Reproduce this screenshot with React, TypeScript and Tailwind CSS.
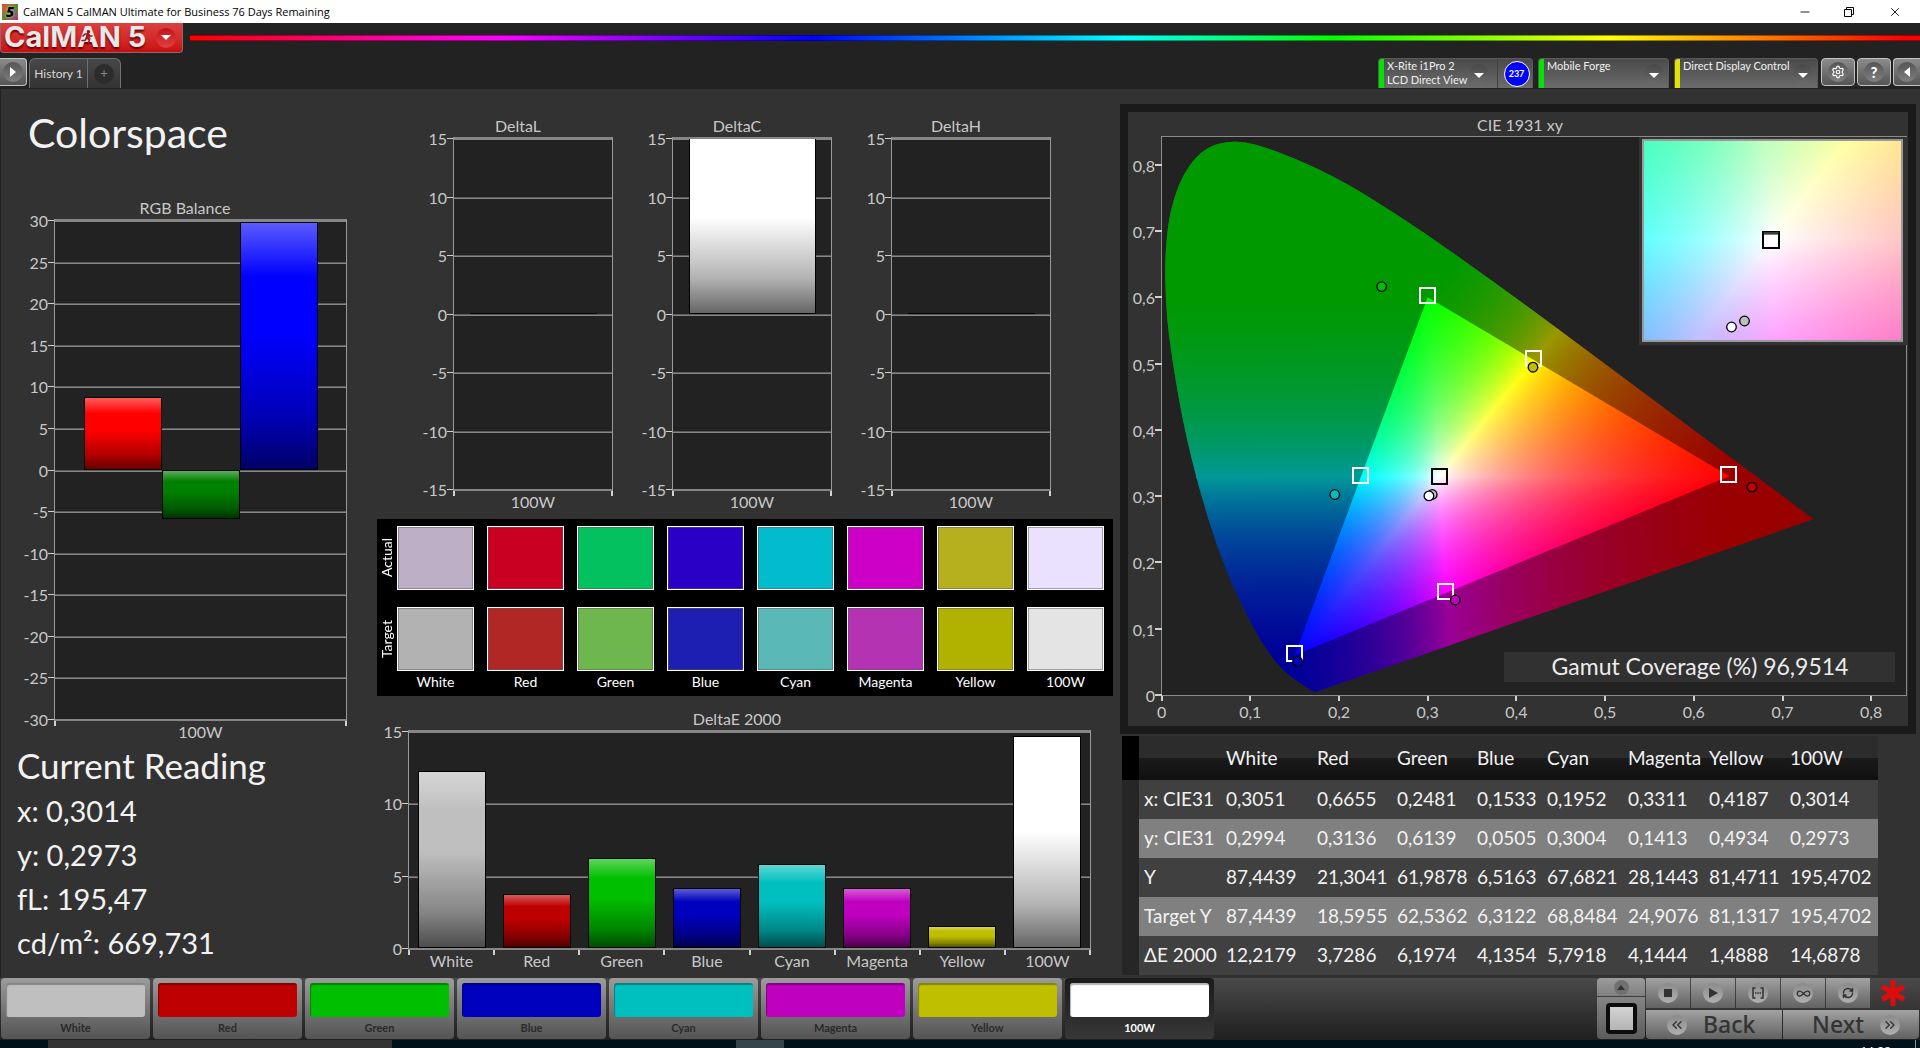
import {
  ChevronsLeft,
  ChevronsRight,
  Infinity as InfinityIcon,
  Minus,
  RefreshCw,
  Settings,
  X,
} from "lucide-react";
import type { ReactNode } from "react";

type Bar = { value: number; color: string };

type ChartProps = {
  id: string;
  title: string;
  width: number;
  height: number;
  plot: { left: number; right: number; top: number; bottom: number };
  titleX: number;
  min: number;
  max: number;
  bars: Bar[];
  // categories along the x axis, each one holds bars.length / categories.length bars
  categories: string[];
  barWidth: number;
};

const colors = [
  { name: "White", fill: "bg-[#bfbfbf]", actual: "bg-[#bcafc6]", target: "bg-[#b2b2b2]" },
  { name: "Red", fill: "bg-[#bf0000]", actual: "bg-[#c90022]", target: "bg-[#b12726]" },
  { name: "Green", fill: "bg-[#00bf00]", actual: "bg-[#03c15f]", target: "bg-[#6eb74f]" },
  { name: "Blue", fill: "bg-[#0000bf]", actual: "bg-[#2b00c6]", target: "bg-[#1c1fb2]" },
  { name: "Cyan", fill: "bg-[#00bfbf]", actual: "bg-[#00bccd]", target: "bg-[#5ab8b7]" },
  { name: "Magenta", fill: "bg-[#bf00bf]", actual: "bg-[#cc00c6]", target: "bg-[#b333b3]" },
  { name: "Yellow", fill: "bg-[#bfbf00]", actual: "bg-[#b6b01f]", target: "bg-[#b1b200]" },
  { name: "100W", fill: "bg-white", actual: "bg-[#eae0ff]", target: "bg-[#e4e4e4]" },
];

const rows = [
  ["x: CIE31", "0,3051", "0,6655", "0,2481", "0,1533", "0,1952", "0,3311", "0,4187", "0,3014"],
  ["y: CIE31", "0,2994", "0,3136", "0,6139", "0,0505", "0,3004", "0,1413", "0,4934", "0,2973"],
  ["Y", "87,4439", "21,3041", "61,9878", "6,5163", "67,6821", "28,1443", "81,4711", "195,4702"],
  ["Target Y", "87,4439", "18,5955", "62,5362", "6,3122", "68,8484", "24,9076", "81,1317", "195,4702"],
  ["ΔE 2000", "12,2179", "3,7286", "6,1974", "4,1354", "5,7918", "4,1444", "1,4888", "14,6878"],
];

const deltaE: Bar[] = [
  { value: 12.2179, color: "#bfbfbf" },
  { value: 3.7286, color: "#bf0000" },
  { value: 6.1974, color: "#00bf00" },
  { value: 4.1354, color: "#0000bf" },
  { value: 5.7918, color: "#00bfbf" },
  { value: 4.1444, color: "#bf00bf" },
  { value: 1.4888, color: "#bfbf00" },
  { value: 14.6878, color: "#ffffff" },
];

const BarChart = ({
  id,
  title,
  width,
  height,
  plot,
  titleX,
  min,
  max,
  bars,
  categories,
  barWidth,
}: ChartProps) => {
  const { left, right, top, bottom } = plot;
  const y = (v: number) => Math.round(bottom - ((v - min) / (max - min)) * (bottom - top));
  const ticks: number[] = [];
  for (let v = min; v <= max; v += 5) ticks.push(v);

  const slot = (right - left) / categories.length;
  const perSlot = bars.length / categories.length;

  return (
    <svg
      viewBox={`0 0 ${width} ${height}`}
      className="block h-auto w-full overflow-visible font-['Lato',sans-serif] text-[16px]"
      fill="#c8c8c8"
      role="img"
      aria-label={title}
    >
      <defs>
        <linearGradient id={`${id}-gloss`} x1="0" y1="0" x2="0" y2="1">
          <stop offset="0" stopColor="#fff" stopOpacity="0.36" />
          <stop offset="0.22" stopColor="#fff" stopOpacity="0" />
          <stop offset="0.45" stopColor="#000" stopOpacity="0" />
          <stop offset="0.8" stopColor="#000" stopOpacity="0.3" />
          <stop offset="1" stopColor="#000" stopOpacity="0.6" />
        </linearGradient>
      </defs>
      <text x={titleX} y={top - 7} textAnchor="middle">
        {title}
      </text>
      <g shapeRendering="crispEdges">
        <rect x={left} y={top} width={right - left} height={bottom - top} fill="#222" />
        {ticks.map((v) => (
          <g key={v}>
            <rect x={left} y={y(v) - 1} width={right - left} height={1} fill="#5c5c5c" />
            <rect x={left} y={y(v)} width={right - left} height={1} fill="#868686" />
            <rect x={left - 7} y={y(v) - 1} width={7} height={1} fill="#d0d0d0" />
          </g>
        ))}
        {bars.map((bar, i) => {
          const s = Math.floor(i / perSlot);
          const inner = i % perSlot;
          const x = Math.round(
            left + slot * s + (slot - barWidth * perSlot) / 2 + inner * barWidth,
          );
          const y0 = y(Math.max(bar.value, 0)) - 1;
          const h = Math.max(y(Math.min(bar.value, 0)) - 1 - y0, 1);
          if (h < 3) {
            return <rect key={i} x={x} y={y0 - 1} width={barWidth} height={1} fill="#000" />;
          }
          return (
            <g key={i}>
              <rect x={x} y={y0} width={barWidth} height={h} fill="#000" />
              <rect x={x + 1} y={y0 + 1} width={barWidth - 2} height={h - 2} fill={bar.color} />
              <rect x={x + 1} y={y0 + 1} width={barWidth - 2} height={h - 2} fill={`url(#${id}-gloss)`} />
            </g>
          );
        })}
        <rect x={left - 1} y={top - 2} width={right - left + 2} height={2} fill="#868686" />
        <rect x={left - 1} y={top - 2} width={1} height={bottom - top + 3} fill="#9a9a9a" />
        <rect x={right} y={top - 2} width={1} height={bottom - top + 3} fill="#9a9a9a" />
        <rect x={left} y={bottom - 1} width={right - left} height={2} fill="#868686" />
        {[...categories, ""].map((_, i) => (
          <rect key={i} x={Math.round(left + slot * i) - 1} y={bottom + 1} width={2} height={5} fill="#d0d0d0" />
        ))}
      </g>
      {ticks.map((v) => (
        <text key={v} x={left - 7} y={y(v) + 6} textAnchor="end">
          {v}
        </text>
      ))}
      {categories.map((c, i) => (
        <text key={c} x={left + slot * (i + 0.5)} y={bottom + 18} textAnchor="middle">
          {c}
        </text>
      ))}
    </svg>
  );
};

// ---- CIE diagram -----------------------------------------------------------

type Pt = [number, number];

const px = ([x, y]: Pt): Pt => [33.6 + 887 * x, 583 - 663 * y];

const locus: Pt[] = [
  [0.1741, 0.005], [0.1714, 0.0051], [0.1644, 0.0109], [0.1566, 0.0177], [0.144, 0.0297],
  [0.1355, 0.0399], [0.1241, 0.0578], [0.1096, 0.0868], [0.0913, 0.1327], [0.0687, 0.2007],
  [0.0454, 0.295], [0.0235, 0.4127], [0.0082, 0.5384], [0.0045, 0.6], [0.0039, 0.6548],
  [0.0069, 0.708], [0.0139, 0.7502], [0.0245, 0.785], [0.0389, 0.812], [0.055, 0.828],
  [0.0743, 0.8348], [0.094, 0.834], [0.1142, 0.8272], [0.1547, 0.8069], [0.1929, 0.7826],
  [0.2296, 0.7553], [0.3016, 0.6923], [0.3731, 0.6245], [0.4441, 0.5547], [0.5125, 0.4866],
  [0.5752, 0.4242], [0.627, 0.3725], [0.6658, 0.334], [0.6915, 0.3083], [0.719, 0.2809],
  [0.7347, 0.2653],
];

// rounds the corners between the sampled wavelengths, keeps both ends sharp
const locusPath = () => {
  const p = locus.map(px);
  let d = `M${p[0]}`;
  for (let i = 1; i < p.length - 1; i++) {
    const mid: Pt = [(p[i][0] + p[i + 1][0]) / 2, (p[i][1] + p[i + 1][1]) / 2];
    d += `Q${p[i]} ${mid}`;
  }
  return `${d}L${p[p.length - 1]}Z`;
};

const W: Pt = [0.3127, 0.329];
const R: Pt = [0.64, 0.33];
const G: Pt = [0.3, 0.6];
const B: Pt = [0.15, 0.06];
const C: Pt = [0.2246, 0.3287];
const M: Pt = [0.3209, 0.1542];
const Y: Pt = [0.4193, 0.5053];

// One sector between two neighbouring hues. base is the channel that is full
// everywhere, mid is the channel that the secondary hue shares.
const sectors = [
  { primary: R, secondary: Y, base: "#f00", mid: "#0f0", rest: "#00f" },
  { primary: G, secondary: Y, base: "#0f0", mid: "#f00", rest: "#00f" },
  { primary: G, secondary: C, base: "#0f0", mid: "#00f", rest: "#f00" },
  { primary: B, secondary: C, base: "#00f", mid: "#0f0", rest: "#f00" },
  { primary: B, secondary: M, base: "#00f", mid: "#f00", rest: "#0f0" },
  { primary: R, secondary: M, base: "#f00", mid: "#00f", rest: "#0f0" },
];

// foot of the perpendicular from p on the line a-b
const foot = (p: Pt, a: Pt, b: Pt): Pt => {
  const dx = b[0] - a[0];
  const dy = b[1] - a[1];
  const t = ((p[0] - a[0]) * dx + (p[1] - a[1]) * dy) / (dx * dx + dy * dy);
  return [a[0] + t * dx, a[1] + t * dy];
};

const unit = (a: Pt, b: Pt): Pt => {
  const l = Math.hypot(b[0] - a[0], b[1] - a[1]);
  return [(b[0] - a[0]) / l, (b[1] - a[1]) / l];
};

// every sector runs slightly under its neighbours so that no gap shows
const sectorPoints = (primary: Pt, secondary: Pt) => {
  const w = px(W);
  const p = px(primary);
  const q = px(secondary);
  const far = (a: Pt, b: Pt): Pt => {
    const u = unit(b, a);
    return [w[0] + (a[0] - w[0]) * 9 + u[0] * 2, w[1] + (a[1] - w[1]) * 9 + u[1] * 2];
  };
  const up = unit(w, p);
  const uq = unit(w, q);
  const apex: Pt = [w[0] - (up[0] + uq[0]) / 2, w[1] - (up[1] + uq[1]) / 2];
  return [apex, far(p, q), far(q, p)].join(" ");
};

const offsets = [0, 0.05, 0.1, 0.2, 0.3, 0.4, 0.5, 0.65, 0.8, 1];

const Ramp = ({ id, from, to, color }: { id: string; from: Pt; to: Pt; color: string }) => (
  <linearGradient
    id={id}
    gradientUnits="userSpaceOnUse"
    x1={from[0]}
    y1={from[1]}
    x2={to[0]}
    y2={to[1]}
  >
    {offsets.map((t) => (
      <stop key={t} offset={t} stopColor={color} stopOpacity={(1 - t) / (1 - t + 2.2 * t)} />
    ))}
  </linearGradient>
);

const SectorDefs = () => (
  <>
    {sectors.map((s, i) => {
      const w = px(W);
      const p = px(s.primary);
      const q = px(s.secondary);
      return (
        <g key={i}>
          <Ramp id={`mid-${i}`} from={foot(p, w, q)} to={p} color={s.mid} />
          <Ramp id={`rest-${i}`} from={w} to={foot(w, p, q)} color={s.rest} />
          <clipPath id={`sector-${i}`}>
            <polygon points={sectorPoints(s.primary, s.secondary)} />
          </clipPath>
        </g>
      );
    })}
  </>
);

const Hues = () => (
  <g>
    {sectors.map((s, i) => (
      <g key={i} className="isolate" clipPath={`url(#sector-${i})`}>
        <rect width={780} height={614} fill={s.base} />
        <rect width={780} height={614} fill={`url(#mid-${i})`} className="mix-blend-screen" />
        <rect width={780} height={614} fill={`url(#rest-${i})`} className="mix-blend-screen" />
      </g>
    ))}
  </g>
);

const measured: { at: Pt; color: string }[] = [
  { at: [0.3051, 0.3024], color: "#bfbfbf" },
  { at: [0.6655, 0.3136], color: "#bf0000" },
  { at: [0.2481, 0.6159], color: "#00bf00" },
  { at: [0.1533, 0.0505], color: "#0000bf" },
  { at: [0.1952, 0.3024], color: "#00bfbf" },
  { at: [0.3311, 0.1433], color: "#bf00bf" },
  { at: [0.4187, 0.4944], color: "#bfbf00" },
  { at: [0.3014, 0.3003], color: "#ffffff" },
];

const CieChart = () => {
  const steps = [0, 1, 2, 3, 4, 5, 6, 7, 8];
  const label = (n: number) => (n === 0 ? "0" : `0,${n}`);
  return (
    <svg
      viewBox="0 0 780 614"
      className="block h-auto w-full font-['Lato',sans-serif] text-[16px]"
      fill="#c8c8c8"
      role="img"
      aria-label="CIE 1931 xy"
    >
      <defs>
        <SectorDefs />
        <clipPath id="locus">
          <path d={locusPath()} />
        </clipPath>
        <clipPath id="gamut">
          <polygon points={[R, G, B].map(px).join(" ")} />
        </clipPath>
        <clipPath id="inset">
          <rect x={515} y={28} width={259} height={201} />
        </clipPath>
      </defs>
      <text x={392} y={19} textAnchor="middle">
        CIE 1931 xy
      </text>
      <rect x={33.5} y={24.5} width={745} height={559} fill="#222" stroke="#8a8a8a" />

      <g clipPath="url(#locus)">
        <Hues />
        <rect width={780} height={614} fill="#000" opacity={0.4} />
      </g>
      <g clipPath="url(#gamut)">
        <Hues />
      </g>

      {steps.map((n) => {
        const [x, y] = px([n / 10, n / 10]);
        return (
          <g key={n}>
            <rect x={Math.round(x) - 1} y={584} width={2} height={5} fill="#d0d0d0" />
            <rect x={27} y={Math.round(y) - 1} width={7} height={2} fill="#d0d0d0" />
            <text x={x} y={606} textAnchor="middle">
              {label(n)}
            </text>
            <text x={27} y={y + 7} textAnchor="end">
              {label(n)}
            </text>
          </g>
        );
      })}

      {[R, G, B, C, M, Y].map((p, i) => {
        const [x, y] = px(p);
        return (
          <rect key={i} x={Math.round(x) - 8} y={Math.round(y) - 9} width={15} height={15} fill="none" stroke="#fff" strokeWidth={2} />
        );
      })}
      <rect x={304} y={357} width={15} height={15} fill="none" stroke="#000" strokeWidth={2} />
      {measured.map(({ at, color }) => {
        const [x, y] = px(at);
        return <circle key={color} cx={x} cy={y} r={4.8} fill={color} stroke="#000" strokeWidth={1.3} />;
      })}

      {/* white point magnified */}
      <rect x={511} y={25} width={268} height={208} fill="#333" />
      <g clipPath="url(#inset)">
        <g transform="translate(643 128) scale(3.91 4.14) translate(-311 -364.9)">
          <Hues />
        </g>
      </g>
      <rect x={515} y={28} width={259} height={201} fill="none" stroke="#999" strokeWidth={2} />
      <rect x={635} y={120} width={16} height={16} fill="#fff" stroke="#000" strokeWidth={2} />
      <rect x={635} y={120} width={16} height={2} fill="#777" stroke="#000" />
      <circle cx={616.5} cy={209} r={4.8} fill="#bfbfbf" stroke="#000" strokeWidth={1.3} />
      <circle cx={603.5} cy={215} r={4.8} fill="#fff" stroke="#000" strokeWidth={1.3} />

      <rect x={376} y={540} width={391} height={30} fill="#313131" />
      <text x={572} y={563} textAnchor="middle" fontSize={23} fill="#ececec">
        Gamut Coverage (%) 96,9514
      </text>
    </svg>
  );
};

// ---- header ----------------------------------------------------------------

const DropArrow = () => (
  <span className="flex size-5 shrink-0 items-center justify-center rounded-full bg-gradient-to-b from-[#484848] to-[#6a6a6a]">
    <svg viewBox="0 0 10 5" className="mt-1 w-[10px]" fill="#fff">
      <path d="M0 0h10L5 5z" />
    </svg>
  </span>
);

const Device = ({ lines, strip, width, children }: { lines: string[]; strip: string; width: string; children?: ReactNode }) => (
  <div className={`flex h-[30px] overflow-hidden rounded-t border border-b-0 border-[#5a5a5a] bg-gradient-to-b from-[#4a4a4a] to-[#6c6c6c] ${width}`}>
    <span className={`w-[5px] shrink-0 ${strip}`} />
    <button className={`flex grow items-center justify-between pl-[3px] text-left ${children ? "pr-0" : "pr-1"}`}>
      <span className="self-start whitespace-nowrap text-[11px] leading-[14px] text-[#f0f0f0]">
        {lines.map((l) => (
          <span key={l} className="block">
            {l}
          </span>
        ))}
      </span>
      <DropArrow />
    </button>
    {children}
  </div>
);

const RoundButton = ({ label, className, children }: { label: string; className: string; children: ReactNode }) => (
  <button
    aria-label={label}
    className={`flex h-7 items-center justify-center border border-[#c4c4c4] bg-gradient-to-b from-[#8c8c8c] to-[#555] ${className}`}
  >
    <span className="flex size-5 items-center justify-center rounded-full bg-gradient-to-b from-[#555] to-[#808080] text-white">
      {children}
    </span>
  </button>
);

const Header = () => (
  <header>
    <div className="flex h-[23px] items-center bg-white font-['Open_Sans',sans-serif] text-black">
      <span className="ml-[2px] flex size-4 items-center justify-center bg-gradient-to-br from-[#e33] via-[#583] to-[#a27]">
        <span className="text-[14px] leading-4 font-extrabold text-black italic [text-shadow:0_0_2px_#fff]">5</span>
      </span>
      <span className="ml-[5px] pt-px text-[11px]">CalMAN 5 CalMAN Ultimate for Business 76 Days Remaining</span>
      <div className="ml-auto flex gap-[32px] pr-[18px]">
        <button aria-label="Minimize">
          <Minus size={14} strokeWidth={1.5} />
        </button>
        <button aria-label="Restore">
          <svg viewBox="0 0 12 12" className="size-3" fill="none" stroke="#000">
            <path d="M.5 3.5h7v7h-7zM2.500 3.500v-2h7v7h-2" />
          </svg>
        </button>
        <button aria-label="Close">
          <X size={14} strokeWidth={1.5} />
        </button>
      </div>
    </div>

    <div className="flex h-[30px] items-start">
      <button
        aria-label="CalMAN 5 menu"
        className="flex h-[30px] w-[183px] shrink-0 items-center justify-between rounded-b border border-t-0 border-[#8a6a6a] bg-gradient-to-b from-[#dd3f3f] to-[#c90d0d] pr-[6px] pl-[3px]"
      >
        <span className="pb-px font-['Inter',sans-serif] text-[29px] leading-[28px] font-bold whitespace-nowrap text-[#e8e8e8] [text-shadow:0_2px_2px_#600]">
          CalM
          <span className="relative">
            A
            <svg
              viewBox="0 0 12 14"
              className="absolute top-[11px] left-1 w-3"
              fill="none"
              stroke="#a01515"
              strokeWidth={1.6}
              strokeLinecap="round"
            >
              <circle cx="7.500" cy="1.800" r="1" fill="#a01515" />
              <path d="M6.500 4l-1 4 3 1.500-1 3.500M5.500 8l-1.500 2.500h-3M2 6l2-2h3l2 2h2" />
            </svg>
          </span>
          N 5
        </span>
        <span className="flex size-5 items-center justify-center rounded-full bg-gradient-to-b from-[#c01018] to-[#e04040]">
          <svg viewBox="0 0 10 5" className="w-[10px]" fill="#fff">
            <path d="M0 0h10L5 5z" />
          </svg>
        </span>
      </button>
      <div className="mt-3 ml-[7px] h-[6px] grow border-y border-black/40 bg-[linear-gradient(90deg,#f00_0%,#f0f_18%,#00f_36%,#0ff_54%,#0f0_66%,#ff0_82%,#f00_99%)]" />
    </div>

    <div className="flex h-[36px] items-start pt-[5px]">
      <RoundButton label="Expand" className="w-[27px] rounded-r border-l-0">
        <svg viewBox="0 0 6 10" className="h-[10px]" fill="#fff">
          <path d="M0 0l6 5-6 5z" />
        </svg>
      </RoundButton>
      <div className="ml-[2px] flex h-[30px] rounded-t-md border border-b-0 border-[#707070] bg-gradient-to-b from-[#484848] to-[#333]">
        <button className="w-[58px] border-r border-[#707070] text-center text-[12px] text-[#d8d8d8]">
          History 1
        </button>
        <button aria-label="Add tab" className="flex w-[32px] items-center justify-center">
          <span className="flex size-5 items-center justify-center rounded-full bg-[#2c2c2c] text-[13px] text-[#888]">
            +
          </span>
        </button>
      </div>
      <div className="ml-auto flex items-start">
        <Device lines={["X-Rite i1Pro 2", "LCD Direct View"]} strip="bg-[#00e400]" width="w-[155px]">
          <span className="ml-2 flex w-[35px] shrink-0 items-center justify-center border-l border-[#404040] pl-[3px]">
            <span className="flex size-[26px] items-center justify-center rounded-full border border-white bg-[#00f] text-[9px] font-bold text-white">
              237
            </span>
          </span>
        </Device>
        <span className="w-[5px]" />
        <Device lines={["Mobile Forge"]} strip="bg-[#00e400]" width="w-[131px]" />
        <span className="w-[5px]" />
        <Device lines={["Direct Display Control"]} strip="bg-[#e4e000]" width="w-[144px]" />
        <span className="w-[3px]" />
        <RoundButton label="Settings" className="mr-[2px] w-[34px] rounded">
          <Settings size={14} />
        </RoundButton>
        <RoundButton label="Help" className="mr-[2px] w-[34px] rounded">
          <span className="text-[15px] leading-none font-black">?</span>
        </RoundButton>
        <RoundButton label="Collapse" className="w-[27px] rounded-l border-r-0">
          <svg viewBox="0 0 6 10" className="h-[10px]" fill="#fff">
            <path d="M6 0L0 5l6 5z" />
          </svg>
        </RoundButton>
      </div>
    </div>
  </header>
);

// ---- bottom bar ------------------------------------------------------------

const Dot = ({ children }: { children: ReactNode }) => (
  <span className="flex size-5 shrink-0 items-center justify-center rounded-full bg-gradient-to-b from-[#8a8a8a] to-[#b0b0b0]">
    {children}
  </span>
);

const transport: { label: string; icon: ReactNode }[] = [
  { label: "Stop", icon: <span className="size-2 bg-[#333]" /> },
  {
    label: "Play",
    icon: (
      <svg viewBox="0 0 9 10" className="ml-px h-[10px]" fill="#333">
        <path d="M0 0l9 5-9 5z" />
      </svg>
    ),
  },
  {
    label: "Read series",
    icon: (
      <svg viewBox="0 0 12 12" className="size-3" fill="none" stroke="#333" strokeWidth={1.5}>
        <path d="M3.500 1h-2.500v10h2.500M8.500 1h2.500v10h-2.500M3 6h1.500M5.300 6h1.500M7.600 6h1.500" />
      </svg>
    ),
  },
  { label: "Read continuous", icon: <InfinityIcon size={15} color="#333" /> },
  { label: "Refresh", icon: <RefreshCw size={12} color="#333" strokeWidth={3} /> },
];

const BottomBar = () => (
  <div className="flex bg-gradient-to-b from-[#4a4a4a] to-[#202020] pb-px">
    <div className="flex gap-[3px] pl-px">
      {colors.map((c, i) => {
        const active = i === colors.length - 1;
        return (
          <button
            key={c.name}
            className={`flex h-[61px] w-[149px] flex-col items-center rounded px-[5px] pt-[5px] text-[11px] leading-[22px] font-bold bg-gradient-to-b ${
              active ? "from-[#1a1a1a] to-[#383838] text-white" : "from-[#9c9c9c] to-[#545454] text-[#2a2a2a]"
            }`}
          >
            <span className={`h-9 w-full rounded-[3px] shadow-[inset_1px_2px_1px_rgba(0,0,0,0.3)] ${c.fill}`} />
            {c.name}
          </button>
        );
      })}
    </div>
    <div className="ml-auto flex gap-px">
      <div className="flex w-[48px] flex-col gap-px">
        <button aria-label="Show more" className="flex h-[18px] items-center justify-center rounded-t bg-gradient-to-b from-[#9c9c9c] to-[#808080]">
          <span className="flex size-[15px] items-center justify-center rounded-full bg-[#707070]">
            <svg viewBox="0 0 8 5" className="w-2" fill="#333">
              <path d="M0 5h8L4 0z" />
            </svg>
          </span>
        </button>
        <button aria-label="Pattern window" className="flex h-[42px] items-center justify-center rounded-b bg-gradient-to-b from-[#858585] to-[#5c5c5c]">
          <span className="size-[31px] rounded border-4 border-[#0c0c0c] bg-gradient-to-b from-[#d4d4d4] to-[#b4b4b4]" />
        </button>
      </div>
      <div className="flex w-[274px] flex-col gap-[2px]">
        <div className="flex gap-px">
          {transport.map((t) => (
            <button
              key={t.label}
              aria-label={t.label}
              className="flex h-[30px] w-[44px] items-center justify-center bg-gradient-to-b from-[#a2a2a2] to-[#626262]"
            >
              <Dot>{t.icon}</Dot>
            </button>
          ))}
          <svg viewBox="0 0 28 28" className="mt-px ml-2 size-7" stroke="#e00b0b" strokeWidth={5}>
            <path d="M14 1v26M3 7.500l22 13M25 7.500l-22 13" />
          </svg>
        </div>
        <div className="flex gap-px font-['Noto_Sans',sans-serif] text-[23px] leading-[29px] font-medium text-[#333]">
          <button className="flex h-[29px] w-[136px] items-center gap-4 rounded-bl bg-gradient-to-b from-[#a2a2a2] to-[#626262] pl-[21px]">
            <Dot>
              <ChevronsLeft size={16} />
            </Dot>
            Back
          </button>
          <button className="flex h-[29px] w-[136px] items-center justify-end gap-4 rounded-br bg-gradient-to-b from-[#a2a2a2] to-[#626262] pr-[19px]">
            Next
            <Dot>
              <ChevronsRight size={16} />
            </Dot>
          </button>
        </div>
      </div>
    </div>
  </div>
);

const DataTable = () => (
  <table className="mt-[2px] ml-[2px] w-[95%] table-fixed border-collapse text-left text-[19px] whitespace-nowrap text-[#f2f2f2]">
    <colgroup>
      <col className="w-[17px]" />
      <col className="w-[84px]" />
      <col className="w-[91px]" />
      <col className="w-[80px]" />
      <col className="w-[80px]" />
      <col className="w-[70px]" />
      <col className="w-[81px]" />
      <col className="w-[81px]" />
      <col className="w-[81px]" />
      <col />
    </colgroup>
    <thead>
      <tr className="h-[44px] bg-[linear-gradient(#2c2c2c_50%,#1a1a1a_50%,#101010)]">
        <td className="bg-black" />
        <td />
        {colors.map((c) => (
          <th key={c.name} scope="col" className="pl-[3px] font-normal">
            {c.name}
          </th>
        ))}
      </tr>
    </thead>
    <tbody>
      {rows.map((row, i) => (
        <tr key={row[0]} className={i % 2 ? "h-[39px] bg-[#808080]" : "h-[39px] bg-[#404040]"}>
          <td className="bg-[#262626]" />
          {row.map((cell, j) =>
            j === 0 ? (
              <th key={j} scope="row" className="pl-[5px] font-normal">
                {cell}
              </th>
            ) : (
              <td key={j} className="pl-[3px]">
                {cell}
              </td>
            ),
          )}
        </tr>
      ))}
    </tbody>
  </table>
);

const App = () => {
  return (
    <div className="min-h-screen bg-[#222] font-['Lato',sans-serif]">
      <Header />
      <main className="grid grid-cols-[376fr_743fr_800fr] border-l border-[#222] bg-[#323232] pb-[3px]">
        <section>
          <h1 className="pt-[19px] pl-[27px] text-[41px] leading-[50px] text-[#f2f2f2]">Colorspace</h1>
          <div className="pt-9">
            <BarChart
              id="rgb"
              title="RGB Balance"
              width={376}
              height={548}
              plot={{ left: 54, right: 345, top: 27, bottom: 526 }}
              titleX={184}
              min={-30}
              max={30}
              bars={[
                { value: 8.7, color: "#ff0000" },
                { value: -6, color: "#008000" },
                { value: 29.8, color: "#0000ff" },
              ]}
              categories={["100W"]}
              barWidth={78}
            />
          </div>
          <div className="pl-4 text-[#f2f2f2]">
            <h2 className="text-[35px] leading-[46px]">Current Reading</h2>
            <div className="pt-px text-[29px] leading-[44px]">
              <p>x: 0,3014</p>
              <p>y: 0,2973</p>
              <p>fL: 195,47</p>
              <p>cd/m²: 669,731</p>
            </div>
          </div>
        </section>

        <section className="flex flex-col pt-6">
          <div className="flex pr-[69px] pl-[17px]">
            {["DeltaL", "DeltaC", "DeltaH"].map((name) => (
              <div key={name} className="min-w-0 flex-1">
                <BarChart
                  id={name}
                  title={name}
                  width={219}
                  height={401}
                  plot={{ left: 60, right: 218, top: 26, bottom: 377 }}
                  titleX={124}
                  min={-15}
                  max={15}
                  bars={[{ value: name === "DeltaC" ? 15 : 0, color: "#ffffff" }]}
                  categories={["100W"]}
                  barWidth={127}
                />
              </div>
            ))}
          </div>
          <div className="mt-[5px] mr-[7px] grid grid-cols-[20px_repeat(8,1fr)] bg-black pt-[7px] pr-[9px] text-center text-[14px] leading-[22px] text-white">
            <span className="flex items-center justify-center pb-[17px] leading-5">
              <span className="rotate-180 [writing-mode:vertical-rl]">Actual</span>
            </span>
            <div className="col-span-8 flex gap-[13px] pb-[17px]">
              {colors.map((c) => (
                <span key={c.name} className={`h-16 flex-1 border border-white shadow-[inset_0_0_0_1px_rgba(90,90,90,0.5)] ${c.actual}`} />
              ))}
            </div>
            <span className="flex items-center justify-center leading-5">
              <span className="rotate-180 [writing-mode:vertical-rl]">Target</span>
            </span>
            <div className="col-span-8 flex gap-[13px]">
              {colors.map((c) => (
                <span key={c.name} className={`h-16 flex-1 border border-white shadow-[inset_0_0_0_1px_rgba(90,90,90,0.5)] ${c.target}`} />
              ))}
            </div>
            <span />
            <div className="col-span-8 flex gap-[13px] pb-[3px]">
              {colors.map((c) => (
                <span key={c.name} className="flex-1">
                  {c.name}
                </span>
              ))}
            </div>
          </div>
          <div className="mt-[10px]">
            <BarChart
              id="de"
              title="DeltaE 2000"
              width={743}
              height={268}
              plot={{ left: 32, right: 713, top: 26, bottom: 243 }}
              titleX={360}
              min={0}
              max={15}
              bars={deltaE}
              categories={colors.map((c) => c.name)}
              barWidth={68}
            />
          </div>
        </section>

        <section className="pt-[15px] pr-1">
          <div className="border-8 border-[#1a1a1a]">
            <CieChart />
          </div>
          <DataTable />
        </section>
      </main>
      <BottomBar />
      <footer className="flex h-2 overflow-hidden bg-[#02121a] text-[12px] leading-4 text-white">
        <span className="ml-12 w-[344px] bg-[#333]" />
        <span className="ml-[344px] w-12 bg-[#35434b]" />
        <span className="mt-[3px] mr-6 ml-auto">14:38</span>
        <span className="mr-1 w-px bg-[#8a9296]" />
      </footer>
    </div>
  );
};

export default App;
